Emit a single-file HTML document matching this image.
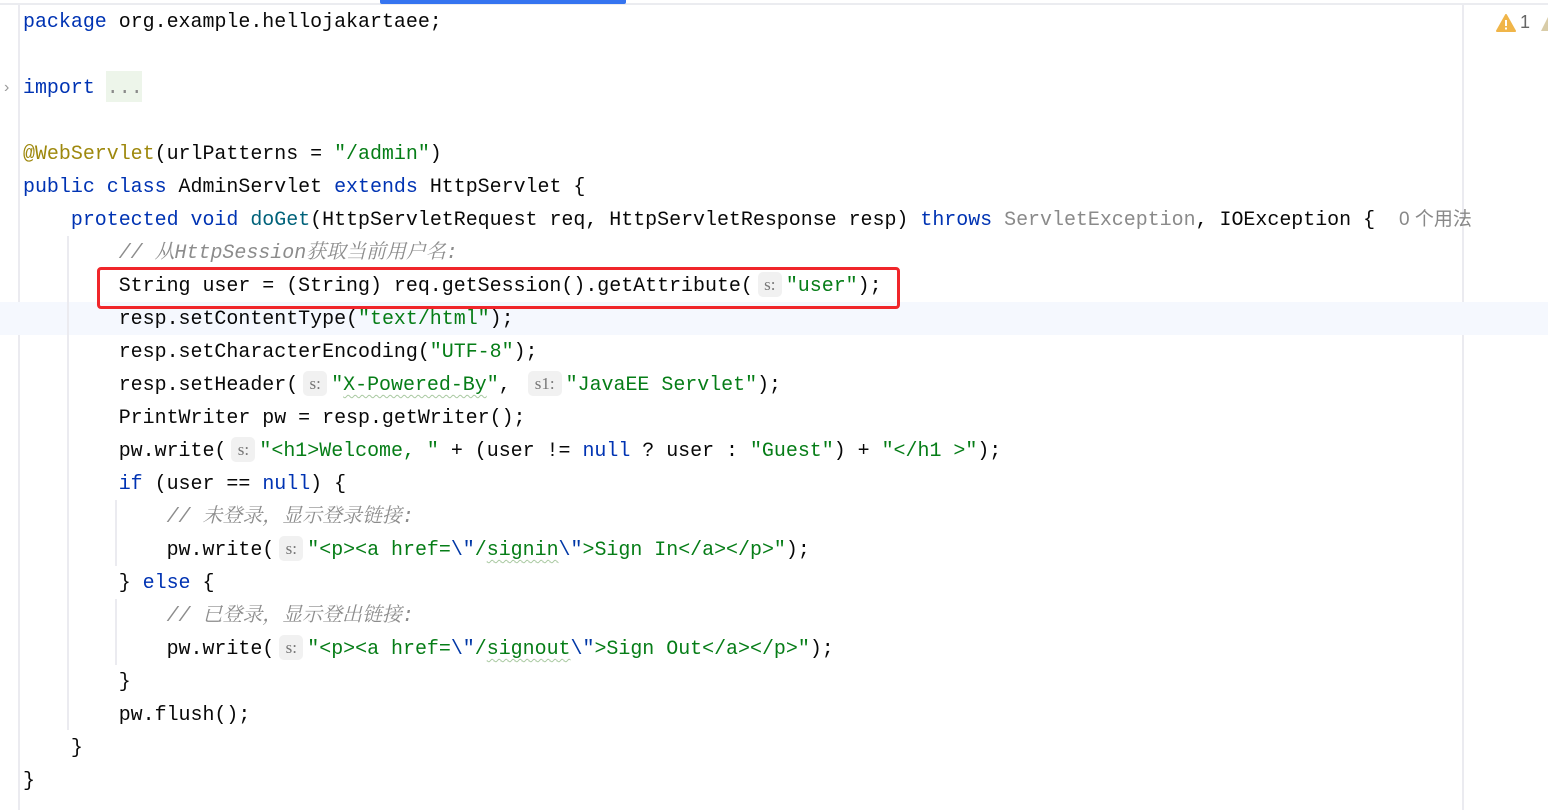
<!DOCTYPE html>
<html><head><meta charset="utf-8">
<style>
html,body{margin:0;padding:0;background:#fff;width:1548px;height:810px;overflow:hidden;position:relative}
.l{position:absolute;left:23px;height:33px;line-height:33px;white-space:pre;font-family:"Liberation Mono","Noto Sans CJK SC",monospace;font-size:19.95px;color:#080808}
.k{color:#0033b3}.s{color:#067d17}.a{color:#9e880d}.m{color:#00627a}.g{color:#8a8a8a}.e{color:#0037a6}
.c{color:#8c8c8c;font-style:italic;font-family:"Liberation Mono","Noto Serif CJK SC",monospace}
.h{display:inline-block;width:24px;text-align:center;height:25px;line-height:25px;vertical-align:middle;margin:-3px 4px 0 5px;padding:0;background:#f1f1f1;border-radius:5px;color:#777;font-family:"Liberation Serif","Noto Serif CJK SC",serif;font-size:17px}
.h2{width:34px}
.w{text-decoration:underline wavy #a8c8a0;text-decoration-thickness:1px;text-underline-offset:4px}
.u{color:#888;font-family:"Liberation Sans","Noto Sans CJK SC",sans-serif;font-size:19px}
.gd{position:absolute;width:2px;background:#ebebf0}
</style></head><body>
<div style="position:absolute;left:0;top:3px;width:1548px;height:2px;background:#ebecf0"></div>
<div style="position:absolute;left:380px;top:0;width:246px;height:4px;background:#3574f0;border-radius:0 0 2px 2px"></div>
<div class="gd" style="left:18px;top:5px;height:805px"></div>
<div style="position:absolute;left:1462px;top:5px;width:2px;height:805px;background:#ebebf0"></div>
<div style="position:absolute;left:0;top:302px;width:1548px;height:33px;background:#f5f8fe"></div>
<div class="gd" style="left:67px;top:236px;height:494px"></div>
<div class="gd" style="left:115px;top:500px;height:66px"></div>
<div class="gd" style="left:115px;top:599px;height:66px"></div>
<div style="position:absolute;left:4px;top:79px;color:#999;font:16px 'Liberation Sans',sans-serif">›</div>
<div style="position:absolute;left:106px;top:71px;width:36px;height:31px;background:#edf5ea"></div>
<svg style="position:absolute;left:1496px;top:14px" width="20" height="18" viewBox="0 0 20 18"><path d="M10 1 L19 17 H1 Z" fill="#f0b549" stroke="#f0b549" stroke-linejoin="round" stroke-width="2"/><rect x="9" y="6" width="2" height="6" fill="#fff"/><rect x="9" y="13.5" width="2" height="2" fill="#fff"/></svg>
<div style="position:absolute;left:1520px;top:12px;color:#666;font:18px 'Liberation Sans',sans-serif">1</div>
<svg style="position:absolute;left:1541px;top:14px" width="10" height="18"><path d="M8 1 L16 17 H0 Z" fill="#d8cca8"/></svg>

<div class="l" style="top:5px"><span class="k">package</span> org.example.hellojakartaee;</div>
<div class="l" style="top:71px"><span class="k">import</span> <span class="g">...</span></div>
<div class="l" style="top:137px"><span class="a">@WebServlet</span>(urlPatterns = <span class="s">"/admin"</span>)</div>
<div class="l" style="top:170px"><span class="k">public class</span> AdminServlet <span class="k">extends</span> HttpServlet {</div>
<div class="l" style="top:203px">    <span class="k">protected void</span> <span class="m">doGet</span>(HttpServletRequest req, HttpServletResponse resp) <span class="k">throws</span> <span class="g">ServletException</span>, IOException {  <span class="u">0 个用法</span></div>
<div class="l" style="top:236px">        <span class="c">// 从HttpSession获取当前用户名:</span></div>
<div class="l" style="top:269px">        String user = (String) req.getSession().getAttribute(<span class="h">s:</span><span class="s">"user"</span>);</div>
<div class="l" style="top:302px">        resp.setContentType(<span class="s">"text/html"</span>);</div>
<div class="l" style="top:335px">        resp.setCharacterEncoding(<span class="s">"UTF-8"</span>);</div>
<div class="l" style="top:368px">        resp.setHeader(<span class="h">s:</span><span class="s">"<span class="w">X-Powered-By</span>"</span>, <span class="h h2">s1:</span><span class="s">"JavaEE Servlet"</span>);</div>
<div class="l" style="top:401px">        PrintWriter pw = resp.getWriter();</div>
<div class="l" style="top:434px">        pw.write(<span class="h">s:</span><span class="s">"&lt;h1&gt;Welcome, "</span> + (user != <span class="k">null</span> ? user : <span class="s">"Guest"</span>) + <span class="s">"&lt;/h1 &gt;"</span>);</div>
<div class="l" style="top:467px">        <span class="k">if</span> (user == <span class="k">null</span>) {</div>
<div class="l" style="top:500px">            <span class="c">// 未登录，显示登录链接:</span></div>
<div class="l" style="top:533px">            pw.write(<span class="h">s:</span><span class="s">"&lt;p&gt;&lt;a href=<span class="e">\"</span>/<span class="w">signin</span><span class="e">\"</span>&gt;Sign In&lt;/a&gt;&lt;/p&gt;"</span>);</div>
<div class="l" style="top:566px">        } <span class="k">else</span> {</div>
<div class="l" style="top:599px">            <span class="c">// 已登录，显示登出链接:</span></div>
<div class="l" style="top:632px">            pw.write(<span class="h">s:</span><span class="s">"&lt;p&gt;&lt;a href=<span class="e">\"</span>/<span class="w">signout</span><span class="e">\"</span>&gt;Sign Out&lt;/a&gt;&lt;/p&gt;"</span>);</div>
<div class="l" style="top:665px">        }</div>
<div class="l" style="top:698px">        pw.flush();</div>
<div class="l" style="top:731px">    }</div>
<div class="l" style="top:764px">}</div>

<div style="position:absolute;left:97px;top:267px;width:797px;height:36px;border:3px solid #f0262a;border-radius:4px"></div>
</body></html>
